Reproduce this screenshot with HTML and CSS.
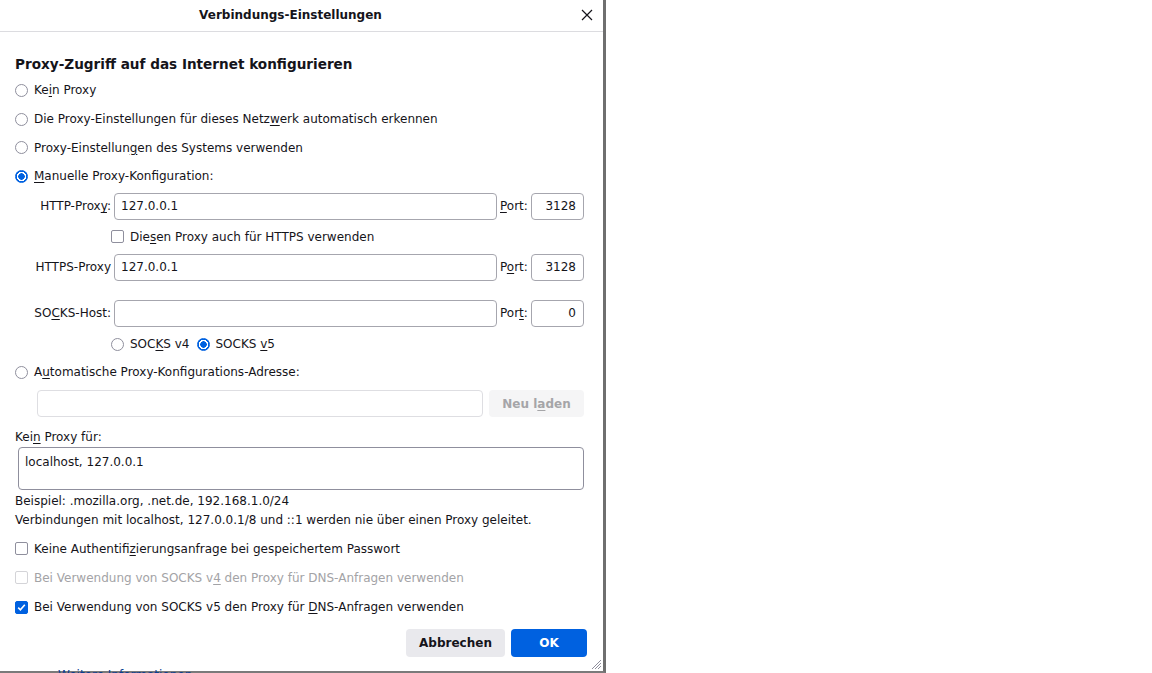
FILE: index.html
```html
<!DOCTYPE html>
<html lang="de">
<head>
<meta charset="utf-8">
<title>Verbindungs-Einstellungen</title>
<link rel="stylesheet" href="styles.css">
</head>
<body>
<div class="dialog">
  <div class="titlebar">
    <div class="title">Verbindungs-Einstellungen</div>
    <svg class="close" width="12" height="12" viewBox="0 0 12 12"><path d="M1 1L11 11M11 1L1 11" stroke="#15141a" stroke-width="1.2" fill="none"/></svg>
  </div>
  <div class="content">
    <h1 class="heading">Proxy-Zugriff auf das Internet konfigurieren</h1>
    <div class="opt top"><span class="radio"></span><span>Ke<u>i</u>n Proxy</span></div>
    <div class="opt"><span class="radio"></span><span>Die Proxy-Einstellungen für dieses Netz<u>w</u>erk automatisch erkennen</span></div>
    <div class="opt"><span class="radio"></span><span>Proxy-Einstellun<u>g</u>en des Systems verwenden</span></div>
    <div class="opt"><span class="radio on"></span><span><u>M</u>anuelle Proxy-Konfiguration:</span></div>

    <div class="grid">
      <span class="lbl">HTTP-Prox<u>y</u>:</span>
      <div class="input">127.0.0.1</div>
      <span class="plbl"><u>P</u>ort:</span>
      <div class="input port">3128</div>

      <div class="sub span"><span class="check"></span><span>Die<u>s</u>en Proxy auch für HTTPS verwenden</span></div>

      <span class="lbl">HTTPS-Proxy</span>
      <div class="input">127.0.0.1</div>
      <span class="plbl">P<u>o</u>rt:</span>
      <div class="input port">3128</div>

      <div class="spacer"></div>

      <span class="lbl">SO<u>C</u>KS-Host:</span>
      <div class="input"></div>
      <span class="plbl">Por<u>t</u>:</span>
      <div class="input port">0</div>

      <div class="sub span socks"><span class="radio"></span><span>SOC<u>K</u>S v4</span><span class="radio on"></span><span>SOCKS <u>v</u>5</span></div>
    </div>

    <div class="opt"><span class="radio"></span><span>A<u>u</u>tomatische Proxy-Konfigurations-Adresse:</span></div>
    <div class="autorow">
      <div class="input dis"></div>
      <div class="btn disbtn">Neu l<u>a</u>den</div>
    </div>

    <div class="noproxy">Kei<u>n</u> Proxy für:</div>
    <div class="textarea">localhost, 127.0.0.1</div>
    <div class="hint h1">Beispiel: .mozilla.org, .net.de, 192.168.1.0/24</div>
    <div class="hint">Verbindungen mit localhost, 127.0.0.1/8 und ::1 werden nie über einen Proxy geleitet.</div>

    <div class="opt chk first"><span class="check"></span><span>Keine Authentifi<u>z</u>ierungsanfrage bei gespeichertem Passwort</span></div>
    <div class="opt chk disabled"><span class="check"></span><span>Bei Verwendung von SOCKS v<u>4</u> den Proxy für DNS-Anfragen verwenden</span></div>
    <div class="opt chk"><span class="check on"></span><span>Bei Verwendung von SOCKS v5 den Proxy für <u>D</u>NS-Anfragen verwenden</span></div>

    <div class="buttons">
      <div class="btn cancel">Abbrechen</div>
      <div class="btn ok">OK</div>
    </div>
  </div>
  <svg class="grip" width="11" height="11" viewBox="0 0 11 11"><path d="M10 1L1 10M10 4L4 10M10 7L7 10" stroke="#8f8f9d" stroke-width="1" fill="none"/></svg>
  <a class="more">Weitere Informationen</a>
</div>
</body>
</html>
```

FILE: styles.css
```css
* { box-sizing: border-box; }
html, body { margin: 0; padding: 0; background: #fff; }
body {
  width: 1152px;
  height: 673px;
  overflow: hidden;
  font-family: "DejaVu Sans", sans-serif;
  font-size: 12px;
  color: #15141a;
}
u { text-decoration: underline; text-underline-offset: 2px; }

.dialog {
  position: relative;
  width: 606px;
  height: 673px;
  border-right: 3px solid #6f6f6f;
  border-bottom: 2px solid #7a7a7a;
  background: #fff;
}

.titlebar {
  height: 32px;
  padding: 0 22px 2px 0;
  border-bottom: 1px solid #dcdce0;
  display: flex;
  align-items: center;
  justify-content: center;
  position: relative;
}
.title { font-weight: bold; font-size: 12px; }
.close { position: absolute; right: 10px; top: 9px; }

.content { padding: 0 19px 0 15px; }

.heading {
  margin: 22px 0 0;
  font-size: 13.6px;
  line-height: 20px;
  font-weight: bold;
}

.opt {
  height: 28.7px;
  display: flex;
  align-items: center;
  gap: 6px;
}
.opt.top { margin-top: 2px; }
.opt > span:last-child { white-space: nowrap; }

.radio {
  flex: none;
  width: 13px;
  height: 13px;
  border: 1px solid #8f8f9d;
  border-radius: 50%;
  background: #fff;
}
.radio.on {
  border-color: #0061e0;
  background: radial-gradient(circle, #0061e0 0 3px, #fff 3.5px 4.5px, #0061e0 5px);
}

.check {
  flex: none;
  width: 13px;
  height: 13px;
  border: 1px solid #8f8f9d;
  border-radius: 2px;
  background: #fff;
}
.check.on {
  border-color: #0061e0;
  background: #0061e0 url("data:image/svg+xml,%3Csvg xmlns='http://www.w3.org/2000/svg' width='11' height='11' viewBox='0 0 11 11'%3E%3Cpath d='M2.2 5.6L4.4 7.8L8.8 2.8' stroke='white' stroke-width='1.6' fill='none'/%3E%3C/svg%3E") center/11px 11px no-repeat;
}
.disabled { color: #a3a3a6; }
.disabled .check { border-color: #d4d4d8; }

.grid {
  margin: 2px 0 0 19px;
  display: grid;
  grid-template-columns: 77px 383px 28px 53px;
  column-gap: 3px;
  align-items: center;
}
.lbl { text-align: right; white-space: nowrap; }
.plbl { white-space: nowrap; }
.span { grid-column: 2 / 5; }
.sub {
  height: 34px;
  display: flex;
  align-items: center;
  gap: 6px;
  margin-left: -3px;
}
.spacer { grid-column: 1 / 5; height: 19px; }
.socks { height: 31px; padding-top: 4px; }
.socks .radio:nth-child(3) { margin-left: 1px; }

.input {
  height: 27px;
  border: 1px solid #a6a6ae;
  border-radius: 4px;
  padding: 0 6px;
  display: flex;
  align-items: center;
  background: #fff;
}
.input.port { justify-content: flex-end; padding-right: 7px; }
.input.dis { border-color: #dedee2; flex: 1; }

.autorow {
  margin: 3.3px 0 0 22px;
  display: flex;
  gap: 6px;
}
.btn {
  border-radius: 4px;
  display: flex;
  align-items: center;
  justify-content: center;
  font-weight: bold;
}
.disbtn {
  width: 95px;
  height: 27px;
  padding-top: 2px;
  background: #f5f5f6;
  color: #a5a5a8;
}

.noproxy { margin-top: 11px; line-height: 18px; }
.textarea {
  margin: 1px 0 0 3px;
  height: 43px;
  border: 1px solid #8f8f9d;
  border-radius: 4px;
  padding: 5px 6px;
  line-height: 18px;
}
.hint { line-height: 19px; }
.hint.h1 { margin-top: 2px; }

.chk { height: 29.3px; }
.chk.first { margin-top: 4.3px; }

.buttons {
  margin-top: 7.3px;
  display: flex;
  justify-content: flex-end;
  gap: 6px;
  margin-right: -3px;
}
.cancel {
  width: 99px;
  height: 28px;
  background: #e9e9ed;
}
.ok {
  width: 76px;
  height: 28px;
  background: #0061e0;
  color: #fff;
}

.grip { position: absolute; right: 1px; bottom: 1px; }
.more {
  position: absolute;
  left: 58px;
  top: 668px;
  color: #0b3d91;
  font-size: 12px;
  line-height: 14px;
  white-space: nowrap;
}
```
